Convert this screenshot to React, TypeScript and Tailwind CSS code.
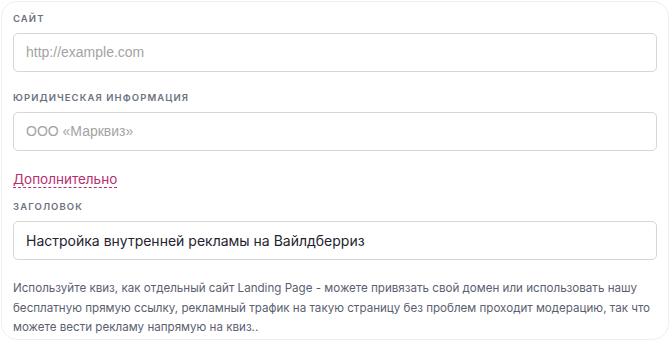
import React from "react";

const font = { fontFamily: "Inter, 'Noto Sans', sans-serif" };

function Field({
  label,
  placeholder,
  value,
}: {
  label: string;
  placeholder?: string;
  value?: string;
}) {
  return (
    <div className="flex flex-col">
      <div className="text-[9.5px] font-semibold uppercase tracking-[1.1px] leading-[14px] text-[#6b7280]">
        {label}
      </div>
      <div className="mt-[7px] flex h-[39px] items-center rounded-[5px] border border-[#d6d6d6] bg-white px-[12px]">
        {value ? (
          <span className="text-[14px] text-[#1f2430]">{value}</span>
        ) : (
          <span
            className="text-[14px] text-[#a3a3a3]"
            style={{ fontFamily: "'Liberation Sans', Arial, sans-serif" }}
          >
            {placeholder}
          </span>
        )}
      </div>
    </div>
  );
}

export default function App() {
  return (
    <div className="bg-white p-px" style={font}>
      <div className="flex h-[339px] w-[668px] flex-col rounded-[16px] border border-[#efefef] bg-white pl-[11px] pr-[11px] pt-[10px]">
        <Field label="Сайт" placeholder="http://example.com" />
        <div className="mt-[19px]">
          <Field label="Юридическая информация" placeholder="ООО «Марквиз»" />
        </div>
        <div className="mt-[15px]">
          <span className="border-b border-dashed border-[#b5306f] text-[13.5px] leading-[18px] text-[#b5306f]">
            Дополнительно
          </span>
        </div>
        <div className="mt-[10px]">
          <Field label="Заголовок" value="Настройка внутренней рекламы на Вайлдберриз" />
        </div>
        <p className="mt-[19px] text-[11.6px] leading-[19.5px] text-[#5b6070]">
          Используйте квиз, как отдельный сайт Landing Page - можете привязать свой домен или
          использовать нашу бесплатную прямую ссылку, рекламный трафик на такую страницу без
          проблем проходит модерацию, так что можете вести рекламу напрямую на квиз..
        </p>
      </div>
    </div>
  );
}
